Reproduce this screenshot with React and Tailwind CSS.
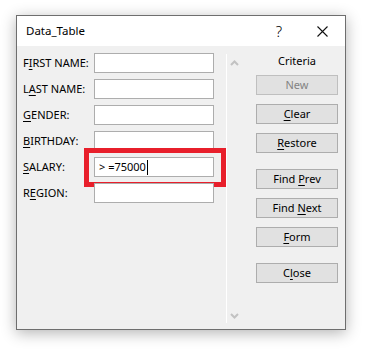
import React from "react";

const fields = [
  { pre: "F", key: "I", post: "RST NAME:" },
  { pre: "L", key: "A", post: "ST NAME:" },
  { pre: "", key: "G", post: "ENDER:" },
  { pre: "", key: "B", post: "IRTHDAY:" },
  { pre: "", key: "S", post: "ALARY:", value: "> =75000", marked: true },
  { pre: "R", key: "E", post: "GION:" },
];

const buttons = [
  { pre: "New", key: "", post: "", disabled: true, mt: "mt-[6px]" },
  { pre: "", key: "C", post: "lear", mt: "mt-[9px]" },
  { pre: "", key: "R", post: "estore", mt: "mt-[9px]" },
  { pre: "Find ", key: "P", post: "rev", mt: "mt-[16px]" },
  { pre: "Find ", key: "N", post: "ext", mt: "mt-[9px]" },
  { pre: "", key: "F", post: "orm", mt: "mt-[9px]" },
  { pre: "C", key: "l", post: "ose", mt: "mt-[16px]" },
];

const Chevron = ({ down }) => (
  <svg width="9" height="6" viewBox="0 0 9 6" className="block">
    <path
      d={down ? "M1 1 L4.5 4.5 L8 1" : "M1 5 L4.5 1.5 L8 5"}
      fill="none"
      stroke="#c2c2c2"
      strokeWidth="2"
    />
  </svg>
);

const App = () => {
  return (
    <div
      className="w-[366px] h-[349px] bg-white pl-[16px] pt-[15px] text-[11px] text-black"
      style={{ fontFamily: '"Noto Sans", "Open Sans", sans-serif' }}
    >
      <div className="w-[330px] h-[315px] border border-[#6e6e6e] bg-[#f0f0f0] shadow-[0_3px_14px_rgba(0,0,0,0.3)] flex flex-col">
        <div className="h-[30px] bg-white flex items-center pl-[9px] shrink-0">
          <span className="flex-1 text-[11.5px]">Data_Table</span>
          <span className="text-[15px] font-light mr-[35px] leading-none">?</span>
          <svg width="11" height="11" viewBox="0 0 11 11" className="mr-[17px]">
            <path d="M0.5 0.5 L10.5 10.5 M10.5 0.5 L0.5 10.5" stroke="#111" strokeWidth="1.1" />
          </svg>
        </div>

        <div className="flex-1 flex">
          <div className="w-[209px] pt-[7px] pl-[6px] flex flex-col gap-[6px]">
            {fields.map((f, i) => (
              <div key={i} className="flex items-center h-[20px]">
                <span className="w-[71px] whitespace-nowrap">
                  {f.pre}
                  <span className="underline underline-offset-2">{f.key}</span>
                  {f.post}
                </span>
                <div className="relative">
                  <div className="w-[120px] h-[20px] border border-[#adadad] bg-white flex items-center pl-[4px]">
                    {f.value && (
                      <>
                        <span>{f.value}</span>
                        <span className="w-px h-[15px] bg-black ml-px" />
                      </>
                    )}
                  </div>
                  {f.marked && (
                    <div className="absolute -left-[10px] -right-[12px] -top-[9px] -bottom-[10px] border-[5px] border-[#e81f2b]" />
                  )}
                </div>
              </div>
            ))}
          </div>

          <div className="w-px bg-white mt-[8px] mb-[6px]" />

          <div className="flex-1 flex">
            <div className="w-[13px] pl-[3px] flex flex-col justify-between pt-[14px] pb-[10px]">
              <Chevron />
              <Chevron down />
            </div>
            <div className="pl-[16px] pt-[7px] flex flex-col">
              <div className="w-[82px] h-[16px] leading-[16px] text-center">Criteria</div>
              {buttons.map((b, i) => (
                <div
                  key={i}
                  className={`${b.mt} w-[82px] h-[20px] flex items-center justify-center bg-[#e1e1e1] border ${
                    b.disabled ? "border-[#bfbfbf] text-[#838383]" : "border-[#adadad]"
                  }`}
                >
                  <span>
                    {b.pre}
                    <span className="underline underline-offset-2">{b.key}</span>
                    {b.post}
                  </span>
                </div>
              ))}
            </div>
          </div>
        </div>
      </div>
    </div>
  );
};

export default App;
